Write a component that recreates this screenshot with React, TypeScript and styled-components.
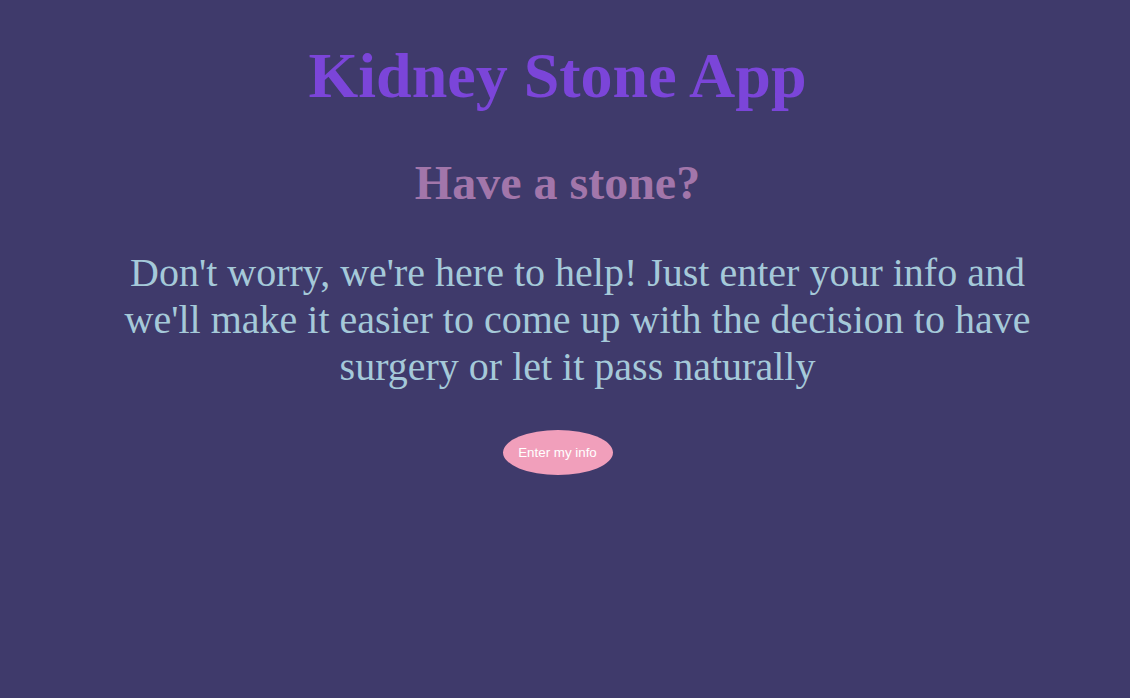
import React from "react";
import styled, { createGlobalStyle } from "styled-components";

const Global = createGlobalStyle`
  html, body { margin: 0; padding: 0; background: #3f3a6b; }
  body { font-family: "Liberation Serif", "Times New Roman", serif; }
`;

const Page = styled.main`
  width: 1115px;
  min-height: 698px;
  display: flex;
  flex-direction: column;
  align-items: center;
  padding-top: 39px;
  box-sizing: border-box;
`;

const Title = styled.h1`
  margin: 0;
  font-size: 64px;
  font-weight: bold;
  color: #7b45d9;
  text-align: center;
`;

const Subtitle = styled.h2`
  margin: 42px 0 0;
  font-size: 48px;
  font-weight: bold;
  color: #a276aa;
  text-align: center;
`;

const Lead = styled.p`
  margin: 39px 0 0 40px;
  width: 920px;
  font-size: 40px;
  line-height: 47px;
  color: #a5c9d9;
  text-align: center;
`;

const EnterButton = styled.button`
  margin-top: 40px;
  width: 110px;
  height: 45px;
  border: none;
  border-radius: 50%;
  background: #f19fbb;
  color: #ffffff;
  font-family: "Liberation Sans", Arial, sans-serif;
  font-size: 13.33px;
  cursor: pointer;
`;

export default function App() {
  return (
    <>
      <Global />
      <Page>
        <Title>Kidney Stone App</Title>
        <Subtitle>Have a stone?</Subtitle>
        <Lead>
          Don't worry, we're here to help! Just enter your info and we'll make it
          easier to come up with the decision to have surgery or let it pass naturally
        </Lead>
        <EnterButton>Enter my info</EnterButton>
      </Page>
    </>
  );
}
